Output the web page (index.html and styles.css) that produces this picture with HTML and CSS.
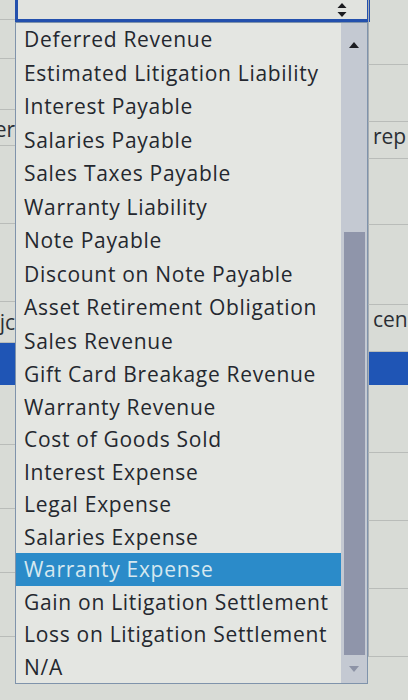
FILE: index.html
```html
<!DOCTYPE html>
<html>
<head>
    <title>Account Dropdown</title>
    <link rel="stylesheet" href="styles.css">
</head>
<body>

    <div class="sheet">
        <!-- left column of the worksheet, mostly hidden by the list -->
        <div class="side side-left">
            <div class="cell" style="height: 20px"></div>
            <div class="cell" style="height: 39px"></div>
            <div class="cell" style="height: 51px"></div>
            <div class="cell cell-text" style="height: 36px"><span>er</span></div>
            <div class="cell" style="height: 78px"></div>
            <div class="cell" style="height: 78px"></div>
            <div class="cell cell-text cell-low" style="height: 41px"><span>jc</span></div>
            <div class="cell cell-blue" style="height: 42px"></div>
            <div class="cell" style="height: 60px"></div>
            <div class="cell" style="height: 64px"></div>
            <div class="cell" style="height: 64px"></div>
            <div class="cell" style="height: 64px"></div>
        </div>

        <div class="middle">
            <div class="select">
                <span class="select-arrows">
                    <svg width="10" height="16" viewBox="0 0 10 16">
                        <path d="M5 1 L9.5 6 L0.5 6 Z" fill="#1b1b1f"/>
                        <path d="M5 15 L9.5 10 L0.5 10 Z" fill="#1b1b1f"/>
                    </svg>
                </span>
            </div>

            <div class="list">
                <ul class="options">
                    <li>Deferred Revenue</li>
                    <li>Estimated Litigation Liability</li>
                    <li>Interest Payable</li>
                    <li>Salaries Payable</li>
                    <li>Sales Taxes Payable</li>
                    <li>Warranty Liability</li>
                    <li>Note Payable</li>
                    <li>Discount on Note Payable</li>
                    <li>Asset Retirement Obligation</li>
                    <li>Sales Revenue</li>
                    <li>Gift Card Breakage Revenue</li>
                    <li>Warranty Revenue</li>
                    <li>Cost of Goods Sold</li>
                    <li>Interest Expense</li>
                    <li>Legal Expense</li>
                    <li>Salaries Expense</li>
                    <li class="selected">Warranty Expense</li>
                    <li>Gain on Litigation Settlement</li>
                    <li>Loss on Litigation Settlement</li>
                    <li>N/A</li>
                </ul>

                <div class="scrollbar">
                    <div class="scroll-up">
                        <svg width="10" height="6" viewBox="0 0 10 6"><path d="M5 0 L10 6 L0 6 Z" fill="#1c1d22"/></svg>
                    </div>
                    <div class="scroll-gap"></div>
                    <div class="scroll-thumb"></div>
                    <div class="scroll-down">
                        <svg width="10" height="6" viewBox="0 0 10 6"><path d="M0 0 L10 0 L5 6 Z" fill="#8d93a6"/></svg>
                    </div>
                </div>
            </div>
        </div>

        <!-- right column of the worksheet -->
        <div class="side side-right">
            <div class="cell" style="height: 65px"></div>
            <div class="cell" style="height: 57px"></div>
            <div class="cell cell-text-right" style="height: 37px"><span>rep</span></div>
            <div class="cell" style="height: 66px"></div>
            <div class="cell" style="height: 80px"></div>
            <div class="cell cell-text-right" style="height: 47px"><span>cen</span></div>
            <div class="cell cell-blue" style="height: 33px"></div>
            <div class="cell" style="height: 68px"></div>
            <div class="cell" style="height: 68px"></div>
            <div class="cell" style="height: 68px"></div>
            <div class="cell" style="height: 68px"></div>
        </div>
    </div>

</body>
</html>
```

FILE: styles.css
```css
body, html {
    margin: 0;
    height: 100%;
    overflow: hidden;
    font-family: "Open Sans", Arial, sans-serif;
    background: #d8dbd6;
}

.sheet {
    display: grid;
    grid-template-columns: 15px 353px 1fr;
    height: 700px;
}

.side {
    display: flex;
    flex-direction: column;
    overflow: hidden;
}

.cell {
    flex: none;
    border-bottom: 1px solid #b9bcb9;
    box-sizing: border-box;
    font-size: 21px;
    color: #2a2e34;
    overflow: hidden;
    white-space: nowrap;
}

.cell-text {
    display: flex;
    justify-content: flex-end;
    align-items: flex-end;
    padding-bottom: 2px;
}

.cell-low {
    padding-bottom: 6px;
}

.cell-text-right {
    display: flex;
    align-items: flex-start;
    padding-left: 4px;
}

.cell-blue {
    background: #1f55b5;
    border-bottom: none;
}

.side-right .cell {
    border-left: 1px solid #a8adb3;
}

.middle {
    display: flex;
    flex-direction: column;
}

.select {
    height: 22px;
    box-sizing: border-box;
    border: 3px solid #2350ad;
    border-top: none;
    margin-right: -2px;
    background: #e1e3df;
    display: flex;
    justify-content: flex-end;
    align-items: center;
    padding-right: 20px;
}

.select-arrows {
    display: flex;
}

.list {
    display: flex;
    height: 662px;
    box-sizing: border-box;
    border: 1px solid #7f93ab;
    background: #e4e6e2;
}

.options {
    list-style: none;
    margin: 0;
    padding: 0;
    flex: 1;
}

.options li {
    height: 32.5px;
    line-height: 32.5px;
    padding-left: 8px;
    font-size: 21px;
    letter-spacing: 0.7px;
    color: #24282f;
    white-space: nowrap;
}

/* the upper rows sit a little further apart */
.options li:nth-child(-n+10) {
    height: 33.5px;
    line-height: 33.5px;
}

.options li.selected {
    background: #2b8bc9;
    color: #d6e8f0;
}

.scrollbar {
    width: 26px;
    display: flex;
    flex-direction: column;
    align-items: center;
    background: #c4c9d2;
}

.scroll-up {
    height: 44px;
    display: flex;
    align-items: center;
    justify-content: center;
}

.scroll-gap {
    height: 165px;
}

.scroll-thumb {
    height: 423px;
    width: 21px;
    background: #8f95aa;
}

.scroll-down {
    flex: 1;
    display: flex;
    align-items: center;
    justify-content: center;
}
```
